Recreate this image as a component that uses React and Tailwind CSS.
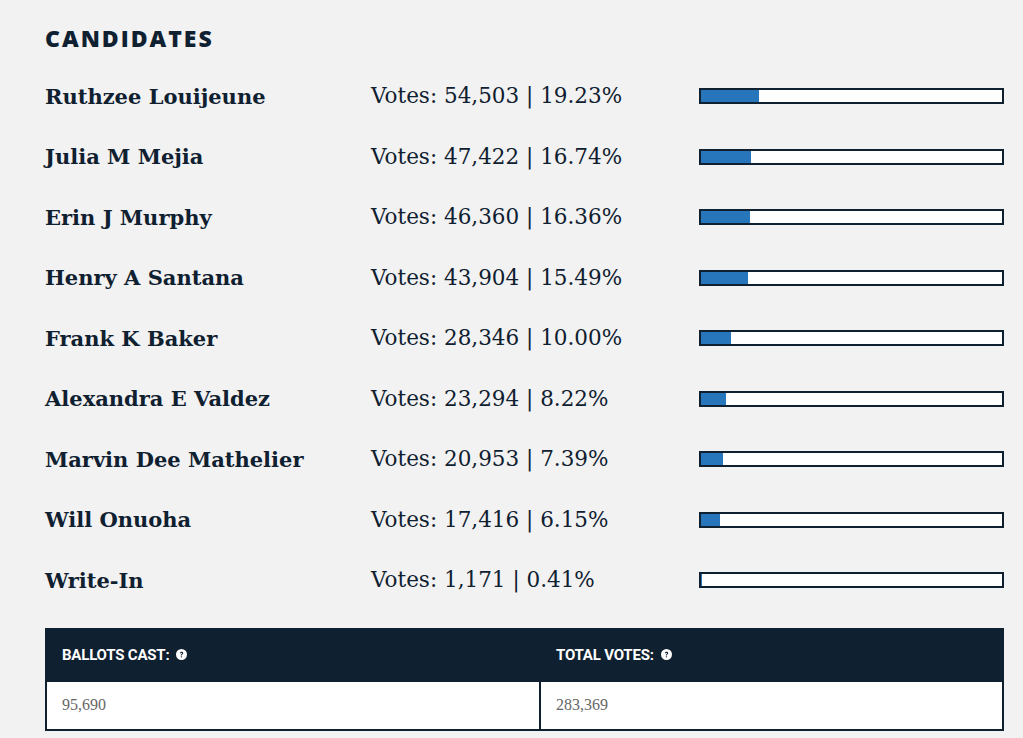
import React from 'react';

const candidates = [
  { name: 'Ruthzee Louijeune', votes: '54,503', pct: 19.23 },
  { name: 'Julia M Mejia', votes: '47,422', pct: 16.74 },
  { name: 'Erin J Murphy', votes: '46,360', pct: 16.36 },
  { name: 'Henry A Santana', votes: '43,904', pct: 15.49 },
  { name: 'Frank K Baker', votes: '28,346', pct: 10.0 },
  { name: 'Alexandra E Valdez', votes: '23,294', pct: 8.22 },
  { name: 'Marvin Dee Mathelier', votes: '20,953', pct: 7.39 },
  { name: 'Will Onuoha', votes: '17,416', pct: 6.15 },
  { name: 'Write-In', votes: '1,171', pct: 0.41 },
];

const HelpIcon = () => (
  <svg width="11" height="11" viewBox="0 0 16 16" className="inline-block ml-[7px] -mt-[2px]">
    <circle cx="8" cy="8" r="8" fill="#fff" />
    <path d="M5.6 6.2c0-1.4 1-2.3 2.5-2.3s2.4.9 2.4 2.1c0 1-.6 1.5-1.3 1.9-.5.3-.7.6-.7 1.1v.4H7v-.5c0-.9.4-1.4 1.1-1.8.5-.3.7-.5.7-.9 0-.5-.3-.8-.8-.8s-.8.3-.9.8H5.6z" fill="#0f2030" />
    <rect x="7" y="10.6" width="1.6" height="1.6" fill="#0f2030" />
  </svg>
);

const StatCell = ({ label, value, divider }) => (
  <div className={divider ? 'border-r-2 border-[#0f2030]' : ''}>
    <div className="bg-[#0f2030] h-[52px] flex items-center pl-[15px] text-white text-[15px] font-bold font-['Roboto',sans-serif] tracking-[-0.2px]">
      {label} <HelpIcon />
    </div>
    <div className="h-[47px] flex items-center pl-[15px] text-[16px] text-[#666] font-['Liberation_Serif',serif]">
      {value}
    </div>
  </div>
);

const App = () => {
  return (
    <div className="min-h-[738px] bg-[#f2f2f2] pl-[45px] pr-[19px] pt-[24px] text-[#0f2030]">
      <h2 className="text-[23px] font-extrabold tracking-[2px] leading-[28px] font-['Open_Sans',sans-serif]">
        CANDIDATES
      </h2>
      <div className="mt-[14px]">
        {candidates.map((c) => (
          <div key={c.name} className="flex items-center h-[60.5px]">
            <div className="w-[326px] text-[21px] font-bold font-['DejaVu_Serif',serif]">
              {c.name}
            </div>
            <div className="w-[328px] text-[21.5px] font-['DejaVu_Serif',serif]">
              Votes: {c.votes} | {c.pct.toFixed(2)}%
            </div>
            <div className="flex-1 h-[16px] border-2 border-[#0f2030] bg-white">
              <div className="h-full bg-[#2775bb]" style={{ width: `${c.pct}%` }} />
            </div>
          </div>
        ))}
      </div>
      <div className="mt-[17px] border-2 border-[#0f2030] grid grid-cols-[494px_1fr] bg-white">
        <StatCell label="BALLOTS CAST:" value="95,690" divider />
        <StatCell label="TOTAL VOTES:" value="283,369" />
      </div>
    </div>
  );
};

export default App;
